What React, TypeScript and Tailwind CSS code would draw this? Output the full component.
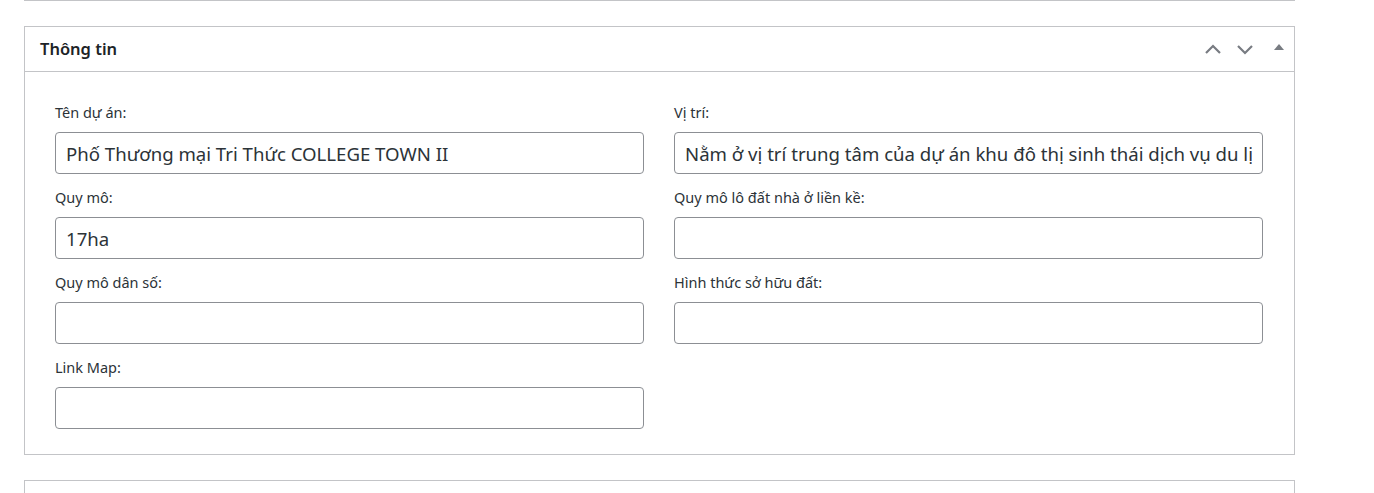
import React from 'react';

const font = { fontFamily: '"Noto Sans", "Open Sans", sans-serif' };

const Field = ({ label, value }: { label: string; value?: string }) => (
  <div className="flex flex-col">
    <label className="h-5 mb-[10px] text-[14.5px] leading-5 text-[#2c3338]">{label}</label>
    <input
      readOnly
      value={value ?? ''}
      className="h-[42px] w-full px-[10px] rounded-[4px] border border-[#8c8f94] text-[18.6px] text-[#2c3338] bg-white outline-none"
      style={font}
    />
  </div>
);

const App = () => {
  return (
    <div className="h-screen overflow-hidden bg-white pl-6" style={font}>
      <div className="w-[1271px] h-px bg-[#c3c4c7]" />

      <div className="mt-[25px] w-[1271px] border border-[#c3c4c7] bg-white">
        <div className="flex items-center h-[45px] pl-[15px] pr-[6px] border-b border-[#c3c4c7]">
          <h2 className="flex-1 text-[16.5px] font-semibold text-[#1d2327]">Thông tin</h2>
          <div className="flex items-center gap-[14px] text-[#787c82]">
            <svg width="18" height="18" viewBox="0 0 18 18" fill="none" stroke="currentColor" strokeWidth="2.2">
              <path d="M2 13L9 6l7 7" />
            </svg>
            <svg width="18" height="18" viewBox="0 0 18 18" fill="none" stroke="currentColor" strokeWidth="2.2">
              <path d="M2 6l7 7 7-7" />
            </svg>
            <svg width="18" height="18" viewBox="0 0 18 18" fill="currentColor" className="-mt-1 ml-[2px]">
              <path d="M4 12l5-6 5 6z" />
            </svg>
          </div>
        </div>

        <div className="grid grid-cols-2 gap-x-[30px] gap-y-[13px] pl-[30px] pr-[31px] pt-[30px] pb-[25px]">
          <Field label="Tên dự án:" value="Phố Thương mại Tri Thức COLLEGE TOWN II" />
          <Field label="Vị trí:" value="Nằm ở vị trí trung tâm của dự án khu đô thị sinh thái dịch vụ du lịch" />
          <Field label="Quy mô:" value="17ha" />
          <Field label="Quy mô lô đất nhà ở liền kề:" />
          <Field label="Quy mô dân số:" />
          <Field label="Hình thức sở hữu đất:" />
          <Field label="Link Map:" />
        </div>
      </div>

      <div className="mt-[25px] w-[1271px] h-[40px] border-t border-x border-[#c3c4c7]" />
    </div>
  );
};

export default App;
